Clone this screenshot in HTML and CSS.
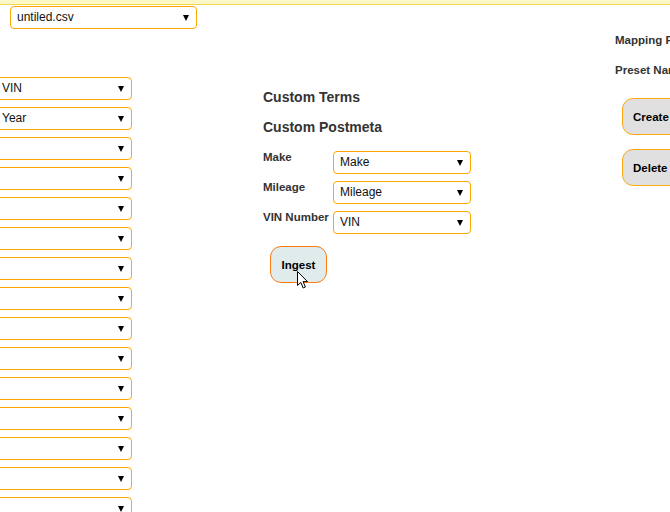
FILE: index.html
```html
<!DOCTYPE html>
<html>
<head>
<meta charset="utf-8">
<link rel="stylesheet" href="styles.css">
</head>
<body>
<div class="topbar"></div>
<div class="filebar">
  <div class="select file">untiled.csv</div>
</div>
<div class="main">
  <div class="col-left">
    <div class="select">VIN</div>
    <div class="select">Year</div>
    <div class="select"></div>
    <div class="select"></div>
    <div class="select"></div>
    <div class="select"></div>
    <div class="select"></div>
    <div class="select"></div>
    <div class="select"></div>
    <div class="select"></div>
    <div class="select"></div>
    <div class="select"></div>
    <div class="select"></div>
    <div class="select"></div>
    <div class="select"></div>
  </div>
  <div class="col-mid">
    <h2 class="heading">Custom Terms</h2>
    <h2 class="heading heading-post">Custom Postmeta</h2>
    <div class="meta-rows">
      <div class="meta-row"><span class="label">Make</span><div class="select meta">Make</div></div>
      <div class="meta-row"><span class="label">Mileage</span><div class="select meta">Mileage</div></div>
      <div class="meta-row"><span class="label">VIN Number</span><div class="select meta">VIN</div></div>
    </div>
    <div class="ingest-wrap">
      <button class="btn ingest">Ingest</button>
      <svg class="cursor" width="13" height="20" viewBox="0 0 13 20"><path d="M1.5 1.5 L1.5 15.5 L4.8 12.4 L7.2 18 L9.4 17 L7.1 11.6 L11.5 11.6 Z" fill="#fff" stroke="#000" stroke-width="1" stroke-linejoin="miter"/></svg>
    </div>
  </div>
  <div class="col-right">
    <div class="label right-label">Mapping Preset</div>
    <div class="label right-label second">Preset Name</div>
    <button class="btn grey create">Create Preset</button>
    <button class="btn grey delete">Delete Preset</button>
  </div>
</div>
</body>
</html>
```
FILE: styles.css
```css
html, body {
  margin: 0;
  padding: 0;
  overflow: hidden;
  background: #ffffff;
  font-family: "Liberation Sans", Arial, sans-serif;
  color: #000;
}
.topbar {
  height: 4px;
  background: #fff8c6;
  border-bottom: 1px solid #f4d64c;
}
.filebar {
  padding: 1px 0 0 10px;
  height: 24px;
}
.select {
  position: relative;
  box-sizing: border-box;
  height: 23px;
  border: 1px solid #ffa800;
  border-radius: 4px;
  background: #fff;
  font-size: 12px;
  line-height: 21px;
  padding: 0 20px 0 6px;
  color: #111;
  white-space: nowrap;
}
.select::after {
  content: "";
  position: absolute;
  right: 7px;
  top: 8px;
  border-left: 3.5px solid transparent;
  border-right: 3.5px solid transparent;
  border-top: 6px solid #000;
}
.file {
  width: 187px;
}
.main {
  display: flex;
  align-items: flex-start;
}
.col-left {
  flex: none;
  width: 137px;
  margin-left: -5px;
  padding-top: 47px;
  display: flex;
  flex-direction: column;
  gap: 7px;
}
.col-mid {
  flex: none;
  width: 208px;
  margin-left: 131px;
  padding-top: 59px;
}
.heading {
  margin: 0;
  font-size: 14px;
  line-height: 16px;
  font-weight: bold;
  color: #333;
}
.heading-post {
  margin-top: 14px;
}
.meta-rows {
  margin-top: 16px;
  display: flex;
  flex-direction: column;
  gap: 7px;
}
.meta-row {
  display: flex;
  align-items: flex-start;
}
.label {
  font-size: 11.5px;
  line-height: 14px;
  font-weight: bold;
  color: #333;
  white-space: nowrap;
}
.meta-row .label {
  width: 70px;
  flex: none;
  margin-top: -1px;
}
.meta {
  width: 138px;
}
.ingest-wrap {
  position: relative;
  margin: 12px 0 0 7px;
  width: 57px;
}
.btn {
  display: block;
  box-sizing: border-box;
  font-family: "Liberation Sans", Arial, sans-serif;
  font-size: 11.5px;
  font-weight: bold;
  color: #000;
  height: 37px;
  border-radius: 11px;
  padding: 0 10px;
  text-align: left;
  white-space: nowrap;
}
.ingest {
  width: 57px;
  background: #e0ecec;
  border: 1px solid #ff7a10;
  text-align: center;
  padding: 0;
}
.cursor {
  position: absolute;
  left: 26px;
  top: 24px;
}
.col-right {
  flex: none;
  margin-left: 144px;
  padding-top: 3px;
}
.right-label.second {
  margin-top: 16px;
}
.grey {
  background: #e0e0e0;
  border: 1px solid #ffaa10;
  width: 110px;
  margin-left: 7px;
}
.create {
  margin-top: 21px;
}
.delete {
  margin-top: 14px;
}
```
